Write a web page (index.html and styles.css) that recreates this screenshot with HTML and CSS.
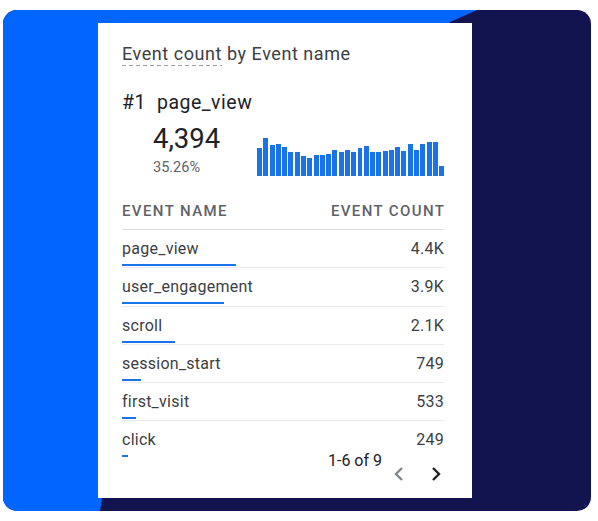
FILE: index.html
```html
<!DOCTYPE html>
<html lang="en">
<head>
<meta charset="utf-8">
<title>Event count by Event name</title>
<link rel="stylesheet" href="styles.css">
</head>
<body>
<div class="frame">
  <div class="card">
    <div class="title"><span class="title-dash">Event count</span> by Event name</div>
    <div class="top">
      <span class="rank">#1</span><span class="top-name">page_view</span>
    </div>
    <div class="hero">
      <div class="hero-stats">
        <div class="hero-num">4,394</div>
        <div class="hero-pct">35.26%</div>
      </div>
      <div class="spark">
        <i style="height:28px"></i><i style="height:38px"></i><i style="height:31px"></i><i style="height:32px"></i><i style="height:29px"></i><i style="height:24px"></i><i style="height:24px"></i><i style="height:20px"></i><i style="height:18px"></i><i style="height:21px"></i><i style="height:21px"></i><i style="height:22px"></i><i style="height:26px"></i><i style="height:24px"></i><i style="height:26px"></i><i style="height:24px"></i><i style="height:28px"></i><i style="height:30px"></i><i style="height:24px"></i><i style="height:24px"></i><i style="height:25px"></i><i style="height:26px"></i><i style="height:29px"></i><i style="height:25px"></i><i style="height:32px"></i><i style="height:26px"></i><i style="height:32px"></i><i style="height:34px"></i><i style="height:34px"></i><i style="height:10px"></i>
      </div>
    </div>
    <div class="thead"><span>Event name</span><span>Event count</span></div>
    <div class="rows">
      <div class="row">
        <div class="row-line"><span class="name">page_view</span><span class="val">4.4K</span></div>
        <div class="bar" style="width:114px"></div>
      </div>
      <div class="row">
        <div class="row-line"><span class="name">user_engagement</span><span class="val">3.9K</span></div>
        <div class="bar" style="width:102px"></div>
      </div>
      <div class="row">
        <div class="row-line"><span class="name">scroll</span><span class="val">2.1K</span></div>
        <div class="bar" style="width:53px"></div>
      </div>
      <div class="row">
        <div class="row-line"><span class="name">session_start</span><span class="val">749</span></div>
        <div class="bar" style="width:19px"></div>
      </div>
      <div class="row">
        <div class="row-line"><span class="name">first_visit</span><span class="val">533</span></div>
        <div class="bar" style="width:14px"></div>
      </div>
      <div class="row">
        <div class="row-line"><span class="name">click</span><span class="val">249</span></div>
        <div class="bar" style="width:6px"></div>
      </div>
    </div>
    <div class="pager">
      <span class="pager-text">1-6 of 9</span>
      <button class="pbtn pbtn-off" aria-label="Previous">
        <svg width="24" height="24" viewBox="0 0 24 24"><path d="M15 6l-6 6 6 6" fill="none" stroke="currentColor" stroke-width="2.4" stroke-linecap="butt" stroke-linejoin="miter"/></svg>
      </button>
      <button class="pbtn" aria-label="Next">
        <svg width="24" height="24" viewBox="0 0 24 24"><path d="M9 6l6 6-6 6" fill="none" stroke="currentColor" stroke-width="2.4" stroke-linecap="butt" stroke-linejoin="miter"/></svg>
      </button>
    </div>
  </div>
</div>
</body>
</html>
```
FILE: styles.css
```css
* { box-sizing: border-box; }
html, body { margin: 0; padding: 0; background: #ffffff; }
body { font-family: Roboto, "Liberation Sans", Arial, sans-serif; }

.frame {
  position: relative;
  margin: 10px 7px 10px 3px;
  height: 501px;
  border-radius: 14px;
  overflow: hidden;
  background: #121450;
  padding: 13px 119px 13px 95px;
}
.frame::before {
  content: "";
  position: absolute;
  inset: 0;
  background: #0066ff;
  clip-path: polygon(0 0, 474px 0, 447px 12px, 99px 488px, 97px 501px, 0 501px);
}

.card {
  position: relative;
  z-index: 1;
  width: 374px;
  height: 475px;
  background: #ffffff;
  padding: 20px 28px 0 24px;
  color: #3c4043;
}

.title {
  font-size: 18px;
  line-height: 22px;
  letter-spacing: 0.55px;
  color: #3c4043;
  height: 23px;
}
.title-dash {
  display: inline-block;
  padding-bottom: 1px;
  background: repeating-linear-gradient(to right, #9aa0a6 0 4px, transparent 4px 7px) left bottom / 100% 1px no-repeat;
}

.top {
  margin-top: 25px;
  font-size: 19.5px;
  line-height: 24px;
  letter-spacing: 0.5px;
  color: #202124;
}
.rank { margin-right: 11px; }

.hero {
  display: flex;
  align-items: flex-end;
  margin-top: 9px;
}
.hero-stats {
  margin-left: 31px;
  width: 104px;
}
.hero-num {
  font-size: 27.5px;
  line-height: 30px;
  color: #202124;
}
.hero-pct {
  margin-top: 5px;
  font-size: 14.5px;
  line-height: 18px;
  color: #5f6368;
}
.spark {
  flex: 1;
  height: 40px;
  margin-bottom: 1px;
  display: flex;
  align-items: flex-end;
  gap: 1.3px;
}
.spark i {
  flex: 1;
  background: #1a73e8;
  display: block;
}

.thead {
  margin-top: 24px;
  display: flex;
  justify-content: space-between;
  font-size: 15px;
  line-height: 20px;
  letter-spacing: 1.4px;
  text-transform: uppercase;
  font-weight: 500;
  color: #5f6368;
  padding-bottom: 8px;
  border-bottom: 1px solid #dadce0;
}
.thead span:last-child { margin-right: -1.4px; }

.row {
  padding-top: 9px;
  padding-bottom: 1.3px;
  border-bottom: 1px solid #e8eaed;
}
.row:last-child { border-bottom: 0; }
.row-line {
  display: flex;
  justify-content: space-between;
  font-size: 16px;
  line-height: 20px;
  letter-spacing: 0.25px;
  color: #3c4043;
}
.bar {
  margin-top: 5px;
  height: 2px;
  background: #1a73e8;
}

.pager {
  margin-top: -7.5px;
  margin-right: -3.5px;
  display: flex;
  justify-content: flex-end;
  align-items: flex-start;
}
.pager-text {
  font-size: 16px;
  line-height: 20px;
  color: #202124;
  margin-right: 4.5px;
}
.pbtn {
  margin-top: 11px;
  width: 24px;
  height: 24px;
  padding: 0;
  border: 0;
  background: transparent;
  color: #202124;
  display: block;
}
.pbtn svg { display: block; }
.pbtn-off { color: #80868b; margin-right: 13px; }
```
